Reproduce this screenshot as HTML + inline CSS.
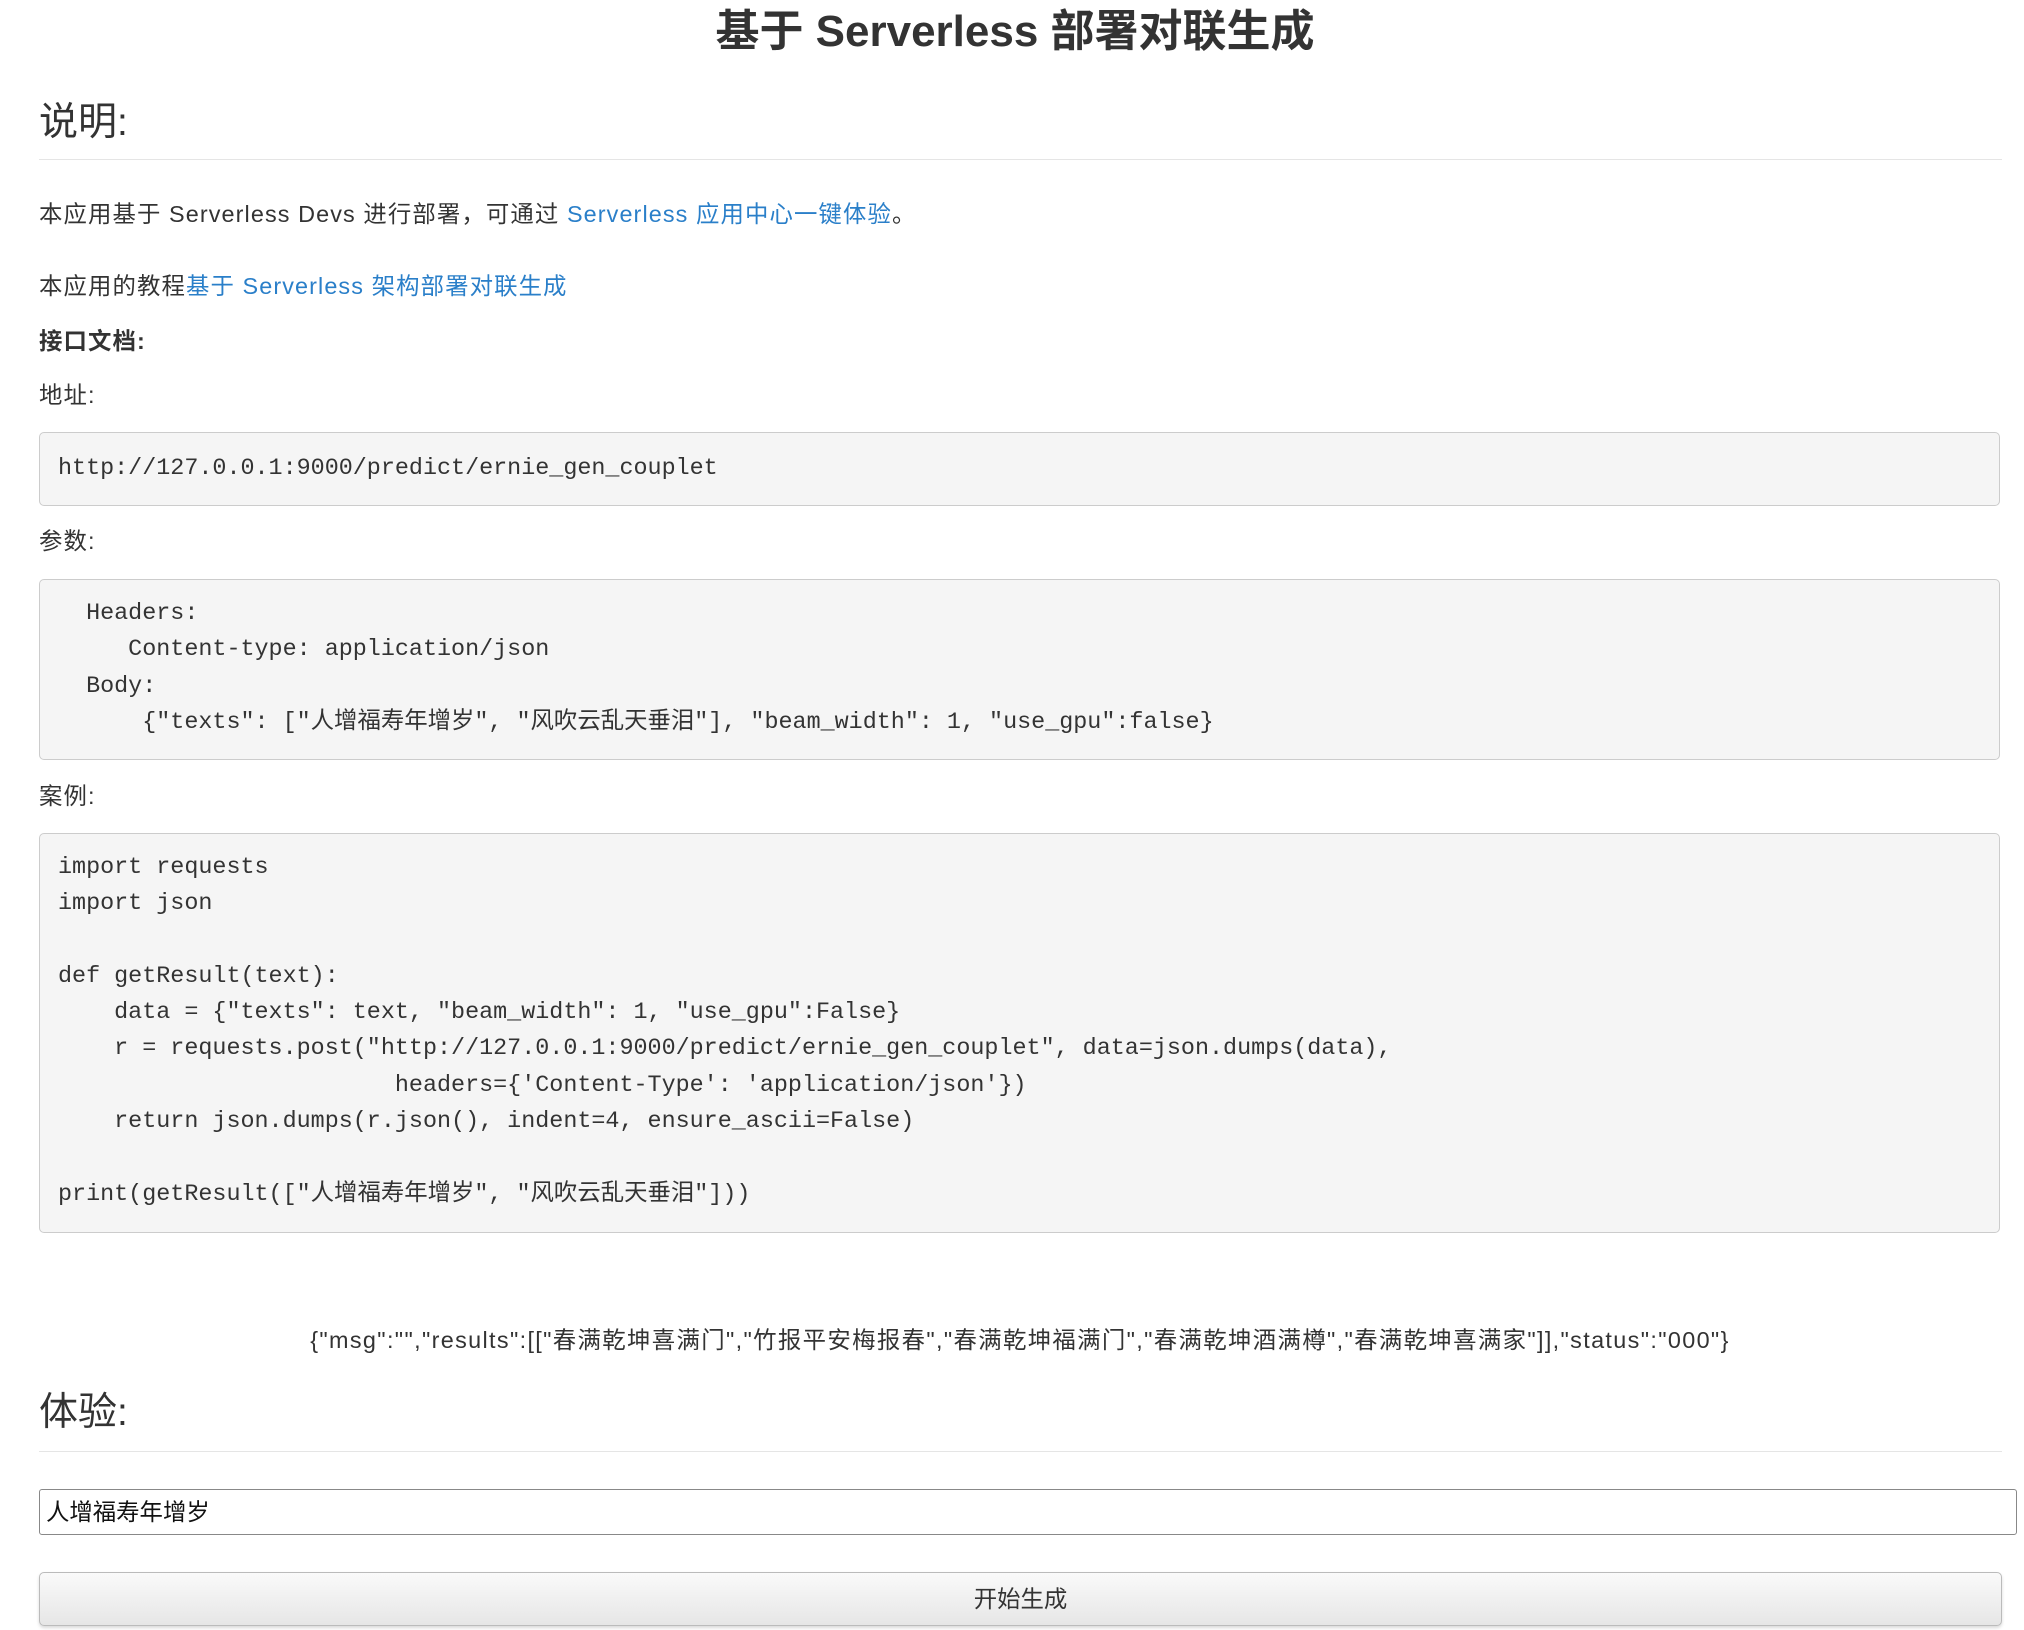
<!DOCTYPE html>
<html><head><meta charset="utf-8"><style>
body{margin:0;width:2024px;height:1630px;background:#fff;color:#333;font-family:"Liberation Sans","Noto Sans CJK SC",sans-serif;position:relative;overflow:hidden}
.a{position:absolute;white-space:pre;line-height:1}
.p{font-size:23.4px;letter-spacing:1.1px}
a{color:#2a7fc9;text-decoration:none}
.pre{position:absolute;left:39px;width:1961px;background:#f5f5f5;border:1px solid #ccc;border-radius:5px;box-sizing:border-box;font-family:"Liberation Mono","Noto Sans CJK SC",monospace;font-size:23.4px;line-height:36.3px;padding:0 18px;white-space:pre;color:#333}
.hr{position:absolute;left:39px;width:1963px;height:1px;background:#e5e5e5}
</style></head><body>
<div class="a" style="left:0;width:2030px;text-align:center;top:10px;font-size:44px;font-weight:bold;">基于 Serverless 部署对联生成</div>
<div class="a" style="left:39px;top:103px;font-size:39px;">说明:</div>
<div class="hr" style="top:159px"></div>
<div class="a p" style="left:39px;top:203px;">本应用基于 Serverless Devs 进行部署，可通过 <a>Serverless 应用中心一键体验</a>。</div>
<div class="a p" style="left:39px;top:275px;">本应用的教程<a>基于 Serverless 架构部署对联生成</a></div>
<div class="a p" style="left:39px;top:330px;font-weight:bold;">接口文档:</div>
<div class="a p" style="left:39px;top:384px;">地址:</div>
<div class="pre" style="top:432px;height:74px;padding-top:18px">http://127.0.0.1:9000/predict/ernie_gen_couplet</div>
<div class="a p" style="left:39px;top:530px;">参数:</div>
<div class="pre" style="top:579px;height:181px;padding-top:16px">  Headers:
     Content-type: application/json
  Body:
      {"texts": ["人增福寿年增岁", "风吹云乱天垂泪"], "beam_width": 1, "use_gpu":false}</div>
<div class="a p" style="left:39px;top:785px;">案例:</div>
<div class="pre" style="top:833px;height:400px;padding-top:16px">import requests
import json

def getResult(text):
    data = {"texts": text, "beam_width": 1, "use_gpu":False}
    r = requests.post("http://127.0.0.1:9000/predict/ernie_gen_couplet", data=json.dumps(data),
                        headers={'Content-Type': 'application/json'})
    return json.dumps(r.json(), indent=4, ensure_ascii=False)

print(getResult(["人增福寿年增岁", "风吹云乱天垂泪"]))</div>
<div class="a p" style="left:0;width:2040px;text-align:center;top:1329px;letter-spacing:1.35px;">{"msg":"","results":[["春满乾坤喜满门","竹报平安梅报春","春满乾坤福满门","春满乾坤酒满樽","春满乾坤喜满家"]],"status":"000"}</div>
<div class="a" style="left:39px;top:1393px;font-size:39px;">体验:</div>
<div class="hr" style="top:1451px"></div>
<div style="position:absolute;left:39px;top:1489px;width:1978px;height:46px;border:1px solid #888;border-radius:3px;box-sizing:border-box;font-size:23.4px;line-height:44px;padding-left:6px;color:#111;">人增福寿年增岁</div>
<div style="position:absolute;left:39px;top:1572px;width:1963px;height:54px;border:1px solid #bbb;border-radius:5px;box-sizing:border-box;background:linear-gradient(#fafafa,#e6e6e6);box-shadow:0 2px 3px rgba(0,0,0,.15);text-align:center;font-size:23.4px;line-height:52px;color:#333;">开始生成</div>
</body></html>
